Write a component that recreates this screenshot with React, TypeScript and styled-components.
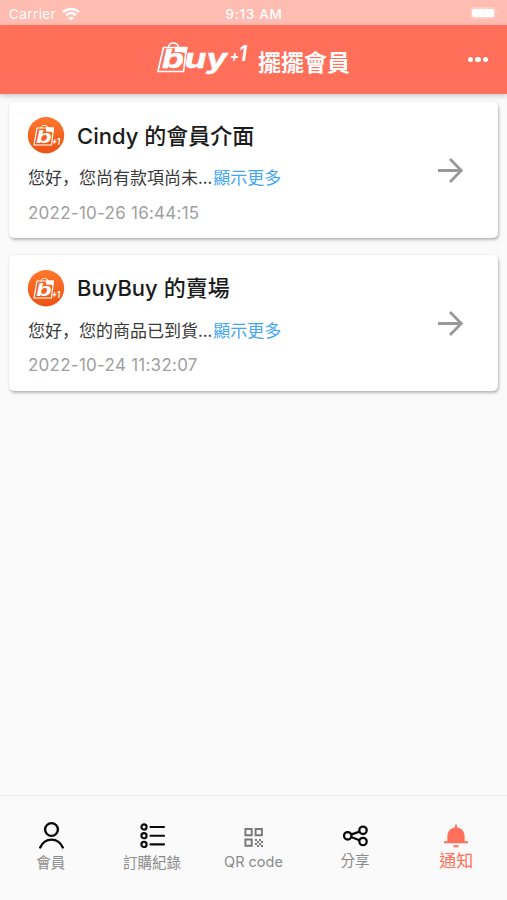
import React from 'react';
import styled, { createGlobalStyle } from 'styled-components';

const Global = createGlobalStyle`
  * { box-sizing: border-box; }
  body { margin: 0; background: #fafafa; font-family: Inter, 'Noto Sans CJK TC', sans-serif; }
`;

const Screen = styled.div`
  width: 507px;
  height: 900px;
  display: flex;
  flex-direction: column;
  overflow: hidden;
  background: #fafafa;
`;

const StatusBar = styled.div`
  height: 25px;
  flex: none;
  display: grid;
  grid-template-columns: 1fr auto 1fr;
  align-items: center;
  padding: 2px 8px 0 9px;
  background: #ffbcb1;
  color: #fff;
  font-size: 13.5px;
`;

const Carrier = styled.div`
  display: flex;
  align-items: center;
  gap: 6px;
  letter-spacing: 0.4px;
`;

const Clock = styled.div`
  font-size: 13.5px;
  font-weight: 500;
  letter-spacing: 0.7px;
`;

const BatterySlot = styled.div`
  display: flex;
  justify-content: flex-end;
`;

const Header = styled.header`
  height: 69px;
  flex: none;
  display: grid;
  grid-template-columns: 1fr auto 1fr;
  align-items: center;
  padding: 0 19px;
  background: #ff6f59;
  box-shadow: 0 2px 5px rgba(0, 0, 0, 0.2);
  color: #fff;
  z-index: 1;
`;

const Brand = styled.div`
  grid-column: 2;
  display: flex;
  align-items: center;
  gap: 7px;
`;

const BrandName = styled.h1`
  margin: 3px 0 0;
  font-family: 'Noto Sans CJK TC', sans-serif;
  font-size: 23px;
  line-height: 34px;
  font-weight: 700;
`;

const MoreButton = styled.button`
  justify-self: end;
  display: flex;
  gap: 2px;
  padding: 0;
  border: 0;
  background: none;
`;

const Dot = styled.i`
  width: 5.5px;
  height: 5.5px;
  border-radius: 50%;
  background: #fff;
`;

const List = styled.main`
  flex: 1;
  display: flex;
  flex-direction: column;
  gap: 16.5px;
  padding: 8px 9px;
`;

const Card = styled.article`
  height: 136px;
  display: flex;
  align-items: center;
  justify-content: space-between;
  padding: 0 34px 0 19px;
  border-radius: 5px;
  background: #fff;
  box-shadow: 1px 2px 3px rgba(0, 0, 0, 0.26), 0 0 2px rgba(0, 0, 0, 0.08);
`;

const CardBody = styled.div`
  height: 100%;
  padding-top: 15px;
`;

const TitleRow = styled.div`
  display: flex;
  align-items: center;
  gap: 12px;
  height: 37px;
`;

const Title = styled.h2`
  margin: 0;
  font-size: 22px;
  line-height: 32px;
  font-weight: 500;
  white-space: pre;
  color: #1c1c1c;
`;

const Message = styled.p`
  margin: 10px 0 0;
  font-family: 'Noto Sans CJK SC', sans-serif;
  font-size: 17px;
  line-height: 26px;
  color: #3a3a3a;
`;

const More = styled.a`
  margin-left: 1px;
  font-family: 'Noto Sans CJK TC', sans-serif;
  color: #42a5f5;
`;

const Stamp = styled.time`
  display: block;
  margin-top: 11.5px;
  font-size: 17px;
  letter-spacing: 0.25px;
  line-height: 22px;
  color: #a0a0a0;
`;

const Tabs = styled.nav`
  height: 105px;
  flex: none;
  display: grid;
  grid-template-columns: repeat(5, 1fr);
  border-top: 1px solid #ededed;
  background: #fafafa;
`;

const Tab = styled.div<{ $active?: boolean; $lift?: number }>`
  display: flex;
  flex-direction: column;
  align-items: center;
  padding: 25px 0 0;
  color: ${(p) => (p.$active ? '#ff6f59' : '#8a8a8a')};
  font-size: ${(p) => (p.$active ? '17px' : '14.5px')};
  line-height: 22px;
  white-space: nowrap;

  span { margin-top: ${(p) => 1 - (p.$lift ?? 0)}px; }
`;

const WifiIcon = () => (
  <svg width="18" height="14" viewBox="0 0 18 14" fill="none" stroke="#fff" strokeWidth="2.5">
    <path d="M1 5.2C5.6.8 12.4.8 17 5.2M4 8.3c2.9-2.7 7.1-2.7 10 0" />
    <path d="M9 13.6 6.2 10.8c1.6-1.5 4-1.5 5.6 0Z" fill="#fff" stroke="none" />
  </svg>
);

const BatteryIcon = () => (
  <svg width="30" height="14" viewBox="0 0 30 14">
    <rect x="1.5" y="0" width="25" height="12" rx="3.5" fill="#fff" opacity=".28" />
    <rect x="3" y="2" width="22" height="8" rx="2" fill="#fff" />
    <path d="M28 4q2 2 0 4Z" fill="#fff" opacity=".45" />
  </svg>
);

const letters = { fontFamily: 'Inter', fontWeight: 700, fontStyle: 'italic' };

const BuyLogo = () => (
  <svg width="94" height="38" viewBox="0 0 94 38" fill="#fff">
    <path d="M11.5 6.5C12 .5 20.5 .5 21.5 6.5" fill="none" stroke="#fff" strokeWidth="1.3" />
    <path d="M6.5 6.5H29.5L26.5 30.5H.9Z" fill="none" stroke="#fff" strokeWidth="1.7" strokeLinejoin="round" />
    <path d="M18 6H30.5L29.5 13.5Q27 11 23 11H17.5Z" />
    <text x="5" y="27" fontSize="26" textLength="22" lengthAdjust="spacingAndGlyphs" stroke="#fff" strokeWidth=".4" {...letters}>b</text>
    <text x="27.5" y="27" fontSize="27" textLength="43" lengthAdjust="spacingAndGlyphs" stroke="#fff" strokeWidth=".4" {...letters}>uy</text>
    <text x="73" y="20" textLength="17" lengthAdjust="spacingAndGlyphs" {...letters}>
      <tspan fontSize="15">+</tspan><tspan fontSize="21">1</tspan>
    </text>
  </svg>
);

const ShopAvatar = () => (
  <svg width="37" height="37" viewBox="0 0 37 37" fill="#fff">
    <defs>
      <linearGradient id="badge" x1="0" y1="0" x2="0" y2="1">
        <stop offset="0" stopColor="#ff782d" />
        <stop offset="1" stopColor="#ed5213" />
      </linearGradient>
    </defs>
    <circle cx="18" cy="18.2" r="18.2" fill="url(#badge)" />
    <path d="M13 11C13 7.5 20 7.5 20 11" fill="none" stroke="#fff" strokeWidth="1" />
    <path d="M9 11H25.5L23.5 28H6Z" fill="none" stroke="#fff" strokeWidth="1.2" strokeLinejoin="round" />
    <path d="M18 10.5H26L25 15.5Q23 14.5 18 14.5Z" />
    <text x="8.3" y="26" fontSize="18" textLength="15.5" lengthAdjust="spacingAndGlyphs" {...letters}>b</text>
    <text x="24" y="28" fontSize="9" textLength="8" lengthAdjust="spacingAndGlyphs" {...letters}>+1</text>
  </svg>
);

const ArrowIcon = () => (
  <svg width="28" height="28" viewBox="0 0 28 28" fill="none" stroke="#999" strokeWidth="2.8">
    <path d="M2 14.5H25M14 3 25.3 14.5 14 26" />
  </svg>
);

const MemberIcon = () => (
  <svg width="30" height="30" viewBox="0 0 30 30" fill="none" stroke="#0a0a0a" strokeWidth="2.4" strokeLinecap="round">
    <circle cx="15.5" cy="8.5" r="6.4" />
    <path d="M4.2 26.5C9 16 22 16 26.8 26.5" />
  </svg>
);

const OrdersIcon = () => (
  <svg width="30" height="30" viewBox="0 0 30 30" fill="none" stroke="#0a0a0a" strokeWidth="2.1">
    {[6, 14.7, 23.4].map((y) => (
      <g key={y}>
        <circle cx="7" cy={y} r="2.6" />
        <path d={`M13.5 ${y}H27`} strokeLinecap="round" />
      </g>
    ))}
  </svg>
);

const QrIcon = () => (
  <svg width="30" height="30" viewBox="0 0 30 30" fill="none" stroke="#777" strokeWidth="1.9">
    <path d="M7.4 8H13.7V14.3H7.4ZM17.6 8H23.9V14.3H17.6ZM7.4 18.5H13.7V24.8H7.4Z" />
    <path
      fill="#777"
      stroke="none"
      d="M17 18h2v2h-2zM21 18h2v2h-2zM19 20h2v2h-2zM23 20h2v2h-2zM17 22h2v2h-2zM21 22h2v2h-2zM19 24h2v2h-2zM23 24h2v2h-2z"
    />
  </svg>
);

const ShareIcon = () => (
  <svg width="30" height="30" viewBox="0 0 30 30" fill="none" stroke="#0a0a0a" strokeWidth="2.3">
    <circle cx="7.7" cy="14.8" r="3.7" />
    <circle cx="23" cy="9.3" r="3.7" />
    <circle cx="23" cy="20.5" r="3.7" />
    <path d="M11 13.6 19.5 10.6M11 16 19.5 19.3" />
  </svg>
);

const BellIcon = () => (
  <svg width="30" height="30" viewBox="0 0 30 30" fill="#ff6f59">
    <path d="M14 5.5Q14 3 15 3T16 5.5V6.6C21 7.2 23.6 11 23.6 15V20.2H27V22.3H3V20.2H6.4V15C6.4 11 9 7.2 14 6.6Z" />
    <rect x="12.5" y="24.3" width="5" height="2" rx=".5" />
  </svg>
);

const notices = [
  { title: 'Cindy 的會員介面', text: '您好，您尚有款項尚未...', time: '2022-10-26 16:44:15' },
  { title: 'BuyBuy 的賣場', text: '您好，您的商品已到貨...', time: '2022-10-24 11:32:07' },
];

export default function App() {
  return (
    <>
      <Global />
      <Screen>
        <StatusBar>
          <Carrier>Carrier<WifiIcon /></Carrier>
          <Clock>9:13 AM</Clock>
          <BatterySlot><BatteryIcon /></BatterySlot>
        </StatusBar>
        <Header>
          <Brand>
            <BuyLogo />
            <BrandName>擺擺會員</BrandName>
          </Brand>
          <MoreButton aria-label="More"><Dot /><Dot /><Dot /></MoreButton>
        </Header>
        <List>
          {notices.map((n) => (
            <Card key={n.time}>
              <CardBody>
                <TitleRow><ShopAvatar /><Title>{n.title}</Title></TitleRow>
                <Message>{n.text}<More>顯示更多</More></Message>
                <Stamp>{n.time}</Stamp>
              </CardBody>
              <ArrowIcon />
            </Card>
          ))}
        </List>
        <Tabs>
          <Tab><MemberIcon /><span>會員</span></Tab>
          <Tab><OrdersIcon /><span>訂購紀錄</span></Tab>
          <Tab $lift={1}><QrIcon /><span>QR code</span></Tab>
          <Tab $lift={2}><ShareIcon /><span>分享</span></Tab>
          <Tab $active $lift={2}><BellIcon /><span>通知</span></Tab>
        </Tabs>
      </Screen>
    </>
  );
}
